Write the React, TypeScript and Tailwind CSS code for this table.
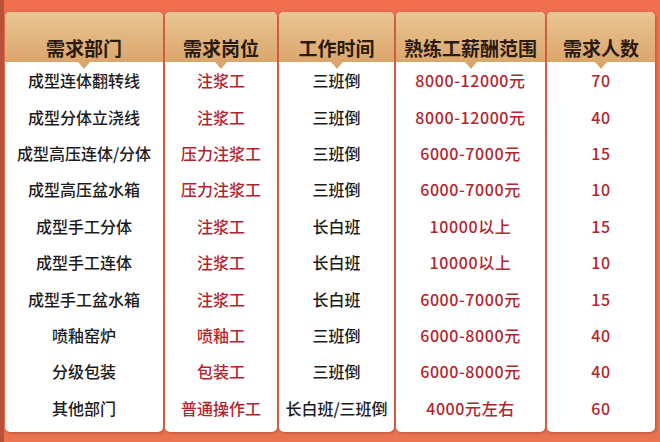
const columns = [
  {
    title: '需求部门',
    width: 'w-[158px]',
    red: false,
    num: false,
    cells: ['成型连体翻转线', '成型分体立浇线', '成型高压连体/分体', '成型高压盆水箱', '成型手工分体', '成型手工连体', '成型手工盆水箱', '喷釉窑炉', '分级包装', '其他部门'],
  },
  {
    title: '需求岗位',
    width: 'w-[112px]',
    red: true,
    num: false,
    cells: ['注浆工', '注浆工', '压力注浆工', '压力注浆工', '注浆工', '注浆工', '注浆工', '喷釉工', '包装工', '普通操作工'],
  },
  {
    title: '工作时间',
    width: 'w-[115px]',
    red: false,
    num: false,
    cells: ['三班倒', '三班倒', '三班倒', '三班倒', '长白班', '长白班', '长白班', '三班倒', '三班倒', '长白班/三班倒'],
  },
  {
    title: '熟练工薪酬范围',
    width: 'w-[149px]',
    red: true,
    num: true,
    cells: ['8000-12000元', '8000-12000元', '6000-7000元', '6000-7000元', '10000以上', '10000以上', '6000-7000元', '6000-8000元', '6000-8000元', '4000元左右'],
  },
  {
    title: '需求人数',
    width: 'w-[108px]',
    red: true,
    num: true,
    cells: ['70', '40', '15', '10', '15', '10', '15', '40', '40', '60'],
  },
]

export default function App() {
  return (
    <div
      className="w-[660px] h-[442px] overflow-hidden bg-gradient-to-b from-[#f06f4f] to-[#ea7350] border-l-[4px] border-[#b9513a] flex gap-[2px] pl-[1px] pt-[12px]"
      style={{ fontFamily: '"Noto Sans CJK SC", "Noto Sans", sans-serif' }}
    >
      {columns.map((col) => (
        <div
          key={col.title}
          className={`${col.width} h-[420px] flex flex-col rounded-[5px] bg-white shadow-[1px_1px_3px_rgba(80,30,10,0.35)] overflow-hidden`}
        >
          <div className="relative h-[50px] shrink-0 bg-gradient-to-b from-[#eac593] to-[#dba66c] flex items-end justify-center pb-[2px]">
            <span className="text-[19px] font-bold text-[#2a1a10] leading-[24px]">{col.title}</span>
            <div className="absolute left-1/2 -translate-x-1/2 top-full w-0 h-0 border-l-[6px] border-r-[6px] border-t-[7px] border-l-transparent border-r-transparent border-t-[#dba66c] z-10" />
          </div>
          <div className="flex flex-col">
            {col.cells.map((c, i) => (
              <div
                key={i}
                className={`h-[36.4px] flex items-center justify-center text-[16px] font-medium whitespace-nowrap ${col.num ? 'tracking-[0.6px]' : ''} ${col.red ? 'text-[#b3252e]' : 'text-[#1c1c1c]'}`}
              >
                {c}
              </div>
            ))}
          </div>
        </div>
      ))}
    </div>
  )
}
